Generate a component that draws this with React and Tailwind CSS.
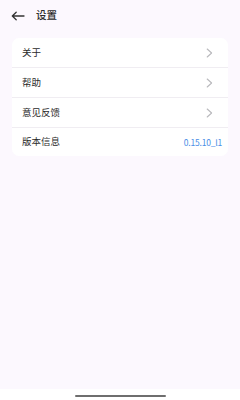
import React from "react";

const font = { fontFamily: '"Noto Sans CJK SC", "Noto Sans", sans-serif' };

function Chevron() {
  return (
    <svg width="7" height="10" viewBox="0 0 7 10" fill="none">
      <path d="M1.2 1 L5.6 5 L1.2 9" stroke="#b8b8bc" strokeWidth="1.1" strokeLinecap="round" strokeLinejoin="round" />
    </svg>
  );
}

function Row({ label, right, last }) {
  return (
    <div className={`flex items-center justify-between pl-[10px] ${last ? "h-[28px] pr-[6px]" : "h-[30px] pr-[15px] border-b border-[#f0edf2]"}`}>
      <span className="text-[9.5px] text-[#2a2a2a] leading-none">{label}</span>
      {right}
    </div>
  );
}

export default function App() {
  return (
    <div className="w-[240px] h-[400px] flex flex-col bg-[#fcf8fe]" style={font}>
      <div className="flex items-center h-[31px] pl-[11px]">
        <svg width="14" height="10" viewBox="0 0 14 10" fill="none">
          <path d="M13 5 H1.5 M5.2 1.2 L1.3 5 L5.2 8.8" stroke="#333" strokeWidth="1.3" strokeLinecap="round" strokeLinejoin="round" />
        </svg>
        <span className="ml-[11px] text-[10.5px] text-[#2a2a2a] font-medium leading-none">设置</span>
      </div>
      <div className="mx-[12px] mt-[7px] bg-white rounded-[7px] flex flex-col">
        <Row label="关于" right={<Chevron />} />
        <Row label="帮助" right={<Chevron />} />
        <Row label="意见反馈" right={<Chevron />} />
        <Row label="版本信息" last right={<span className="text-[8.5px] tracking-[-0.2px] text-[#4a8ee6] leading-none">0.15.10_l1</span>} />
      </div>
      <div className="flex-1" />
      <div className="h-[11px] bg-white flex items-center justify-center">
        <div className="w-[91px] h-[2px] rounded-full bg-[#6e6e6e] mt-[2px]" />
      </div>
    </div>
  );
}
